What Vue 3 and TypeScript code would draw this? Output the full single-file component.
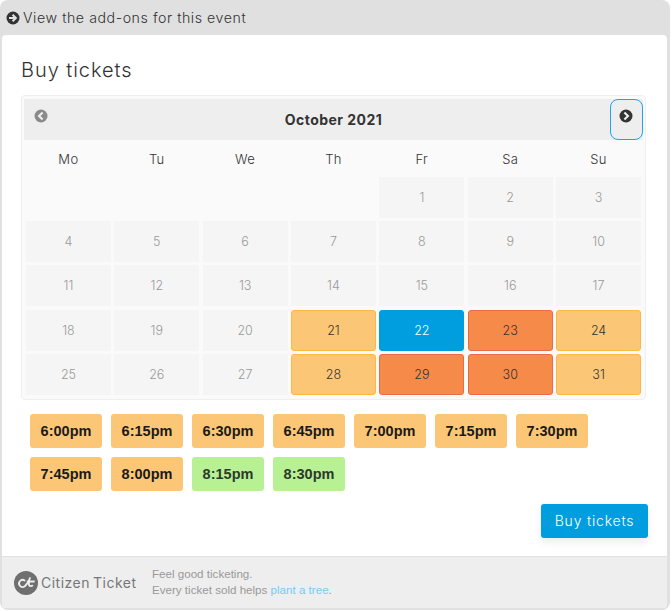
<script setup lang="ts">
interface Day { n: number | null; kind: string }
const weekdays = ['Mo', 'Tu', 'We', 'Th', 'Fr', 'Sa', 'Su']
const kinds: Record<number, string> = {
  21: 'amber', 22: 'active', 23: 'orange', 24: 'amber',
  28: 'amber', 29: 'orange', 30: 'orange', 31: 'amber'
}
const days: Day[] = [
  ...[null, null, null, null].map(() => ({ n: null, kind: 'empty' })),
  ...Array.from({ length: 31 }, (_, i) => ({ n: i + 1, kind: kinds[i + 1] ?? 'off' }))
]
const times = [
  { t: '6:00pm', g: false }, { t: '6:15pm', g: false }, { t: '6:30pm', g: false },
  { t: '6:45pm', g: false }, { t: '7:00pm', g: false }, { t: '7:15pm', g: false },
  { t: '7:30pm', g: false }, { t: '7:45pm', g: false }, { t: '8:00pm', g: false },
  { t: '8:15pm', g: true }, { t: '8:30pm', g: true }
]
</script>

<template>
  <div class="widget">
    <div class="addons">
      <svg class="addons-icon" viewBox="0 0 14 14" width="14" height="14">
        <circle cx="7" cy="7" r="6.5" fill="#333" />
        <path d="M3 7h6.4M6.6 3.8 9.8 7l-3.2 3.2" fill="none" stroke="#e0e0e0" stroke-width="2.1" />
      </svg>
      <span>View the add-ons for this event</span>
    </div>
    <div class="card">
      <div class="body">
        <h2 class="title">Buy tickets</h2>
        <div class="calendar">
          <div class="cal-head">
            <button class="nav prev" type="button" aria-label="Previous">
              <svg viewBox="0 0 14 14" width="14" height="14">
                <circle cx="7" cy="7" r="6.5" fill="#8a8a8a" />
                <path d="M8.6 3.4 5 7l3.6 3.6" fill="none" stroke="#eee" stroke-width="2.1" />
              </svg>
            </button>
            <div class="month">October 2021</div>
            <button class="nav next" type="button" aria-label="Next">
              <svg viewBox="0 0 14 14" width="14" height="14">
                <circle cx="7" cy="7" r="6.5" fill="#333" />
                <path d="M5.4 3.4 9 7l-3.6 3.6" fill="none" stroke="#eee" stroke-width="2.1" />
              </svg>
            </button>
          </div>
          <div class="cal-body">
            <div class="weekdays">
              <div v-for="w in weekdays" :key="w" class="weekday">{{ w }}</div>
            </div>
            <div class="days">
              <div v-for="(d, i) in days" :key="i" class="day" :class="d.kind">{{ d.n }}</div>
            </div>
          </div>
        </div>
        <div class="times">
          <div v-for="x in times" :key="x.t" class="time" :class="{ green: x.g }">{{ x.t }}</div>
        </div>
        <div class="actions">
          <button class="buy" type="button">Buy tickets</button>
        </div>
      </div>
      <div class="footer">
        <div class="logo">
          <svg viewBox="0 0 24 24" width="24" height="24">
            <circle cx="12" cy="12" r="12" fill="#6f6f6f" />
            <path d="M10.6 9.6a3.5 3.5 0 1 0 .4 5.4c2-1.6 3.6-4.4 5-8M13.6 10.5h6.4M15.4 10.5c-1.2 3-.6 5.6 3 4.2" fill="none" stroke="#eee" stroke-width="1.8" stroke-linecap="round" />
          </svg>
          <span class="brand">Citizen Ticket</span>
        </div>
        <div class="tagline">
          <div>Feel good ticketing.</div>
          <div>Every ticket sold helps <a class="link">plant a tree</a>.</div>
        </div>
      </div>
    </div>
  </div>
</template>

<style>
html, body { margin: 0; background: #fff; }
</style>

<style scoped>
.widget {
  width: 670px;
  height: 610px;
  box-sizing: border-box;
  background: #e0e0e0;
  border-radius: 8px;
  padding: 0 3px 2px 2px;
  display: flex;
  flex-direction: column;
  font-family: Inter, "Open Sans", sans-serif;
  color: #333;
}
.addons {
  height: 35px;
  display: flex;
  align-items: center;
  gap: 3px;
  padding: 0 0 0 4px;
  box-sizing: border-box;
  font-size: 14.2px;
  font-weight: 300;
  letter-spacing: 0.55px;
}
.addons-icon { flex: none; }
.card {
  flex: 1;
  background: #fff;
  border-radius: 4px;
  display: flex;
  flex-direction: column;
  overflow: hidden;
}
.body {
  flex: 1;
  padding: 0 18px 0 19px;
}
.title {
  margin: 0;
  padding-top: 22px;
  height: 60px;
  box-sizing: border-box;
  font-size: 20px;
  line-height: 26px;
  font-weight: 300;
  letter-spacing: 0.95px;
}
.calendar {
  width: 625px;
  height: 305px;
  box-sizing: border-box;
  border: 1px solid #efefef;
  border-radius: 4px;
  padding: 3px 2px;
  background: #fafafa;
}
.cal-head {
  display: flex;
  align-items: stretch;
  height: 41px;
  background: #eee;
}
.nav {
  flex: none;
  width: 33px;
  padding: 9px 1px 0 0;
  display: flex;
  justify-content: center;
  align-items: flex-start;
  background: none;
  border: 1px solid transparent;
  border-radius: 8px;
}
.next { border-color: #1ca5ee; }
.prev { padding-right: 0; }
.month {
  flex: 1;
  text-align: center;
  font-weight: 700;
  font-size: 14px;
  letter-spacing: 0.45px;
  line-height: 41px;
}
.cal-body { padding: 0 2px; }
.weekdays {
  display: grid;
  grid-template-columns: repeat(7, 1fr);
  column-gap: 3.5px;
  height: 37px;
  align-items: center;
  font-size: 13px;
  font-weight: 300;
  letter-spacing: 0.4px;
  color: #333;
  text-align: center;
}
.days {
  display: grid;
  grid-template-columns: repeat(7, 1fr);
  grid-auto-rows: 41px;
  column-gap: 3.5px;
  row-gap: 3.2px;
}
.day {
  display: flex;
  align-items: center;
  justify-content: center;
  font-size: 12.5px;
  font-weight: 300;
  border: 1px solid transparent;
  border-radius: 3px;
  box-sizing: border-box;
}
.empty { background: transparent; }
.off { background: #f5f5f5; color: #999; border-radius: 0; }
.amber { background: #fbc776; border-color: #fdb844; color: #333; }
.orange { background: #f68a48; border-color: #ec6a45; color: #333; }
.active { background: #009ddf; border-color: #009ddf; color: #fff; }
.times {
  display: flex;
  flex-wrap: wrap;
  gap: 9px;
  margin-top: 14px;
  padding-left: 9px;
  width: 590px;
}
.time {
  width: 72px;
  height: 34px;
  padding-bottom: 1px;
  box-sizing: border-box;
  background: #fbc776;
  border-radius: 3px;
  display: flex;
  align-items: center;
  justify-content: center;
  font-family: "Liberation Sans", Arial, sans-serif;
  font-weight: 700;
  font-size: 14.5px;
  color: #1a1a1a;
}
.green { background: #b7f194; color: #2c3a2a; }
.actions {
  display: flex;
  justify-content: flex-end;
  margin-top: 13px;
  padding-right: 1px;
}
.buy {
  width: 107px;
  height: 34px;
  padding: 0 0 2px;
  border: 0;
  border-radius: 3px;
  background: #009ddf;
  color: #fff;
  font-family: Inter, "Open Sans", sans-serif;
  font-size: 14px;
  font-weight: 300;
  letter-spacing: 0.8px;
  box-shadow: 0 4px 8px rgba(0, 0, 0, 0.08);
}
.footer {
  height: 52px;
  box-sizing: border-box;
  background: #eee;
  border-top: 1.5px solid #e2e2e2;
  display: flex;
  align-items: center;
  padding-left: 12px;
}
.logo {
  display: flex;
  align-items: center;
  gap: 3px;
  width: 138px;
  flex: none;
}
.brand {
  font-size: 14px;
  font-weight: 400;
  color: #777;
  word-spacing: -1.5px;
  letter-spacing: 0.5px;
}
.tagline {
  font-family: "Liberation Sans", Arial, sans-serif;
  font-size: 11.6px;
  line-height: 16px;
  padding-bottom: 2px;
  color: #999;
}
.link { color: #7cc8ee; }
</style>
